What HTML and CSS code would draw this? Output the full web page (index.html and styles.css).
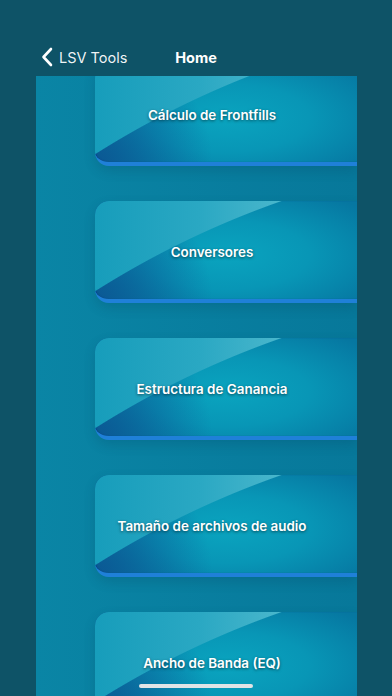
FILE: index.html
```html
<!DOCTYPE html>
<html lang="es">
<head>
  <meta charset="UTF-8" />
  <meta name="viewport" content="width=device-width, initial-scale=1.0">
  <title>Home</title>
  <link rel="stylesheet" href="styles.css">
</head>
<body>
  <div class="nav">
    <a class="back" href="#">
      <svg class="chevron" width="12" height="20" viewBox="0 0 12 20">
        <path d="M10 2 L2.5 10 L10 18" fill="none" stroke="white" stroke-width="2.6" stroke-linecap="round" stroke-linejoin="round"/>
      </svg>
      <span>LSV Tools</span>
    </a>
    <div class="title">Home</div>
  </div>

  <div class="panel">
    <div class="card-list">
      <div class="card"><span>Cálculo de Frontfills</span></div>
      <div class="card"><span>Conversores</span></div>
      <div class="card"><span>Estructura de Ganancia</span></div>
      <div class="card"><span>Tamaño de archivos de audio</span></div>
      <div class="card"><span>Ancho de Banda (EQ)</span></div>
    </div>
  </div>

  <div class="home-indicator"></div>
</body>
</html>
```

FILE: styles.css
```css
body {
  margin: 0;
  width: 392px;
  height: 696px;
  overflow: hidden;
  background-color: #0e5367;
  font-family: Inter, Roboto, "Liberation Sans", sans-serif;
  color: white;
  position: relative;
}
.nav {
  height: 76px;
  position: relative;
  display: flex;
  align-items: flex-end;
  justify-content: center;
}
.back {
  position: absolute;
  left: 41px;
  top: 47px;
  display: flex;
  align-items: center;
  gap: 6px;
  color: rgba(255, 255, 255, 0.95);
  text-decoration: none;
  font-size: 14.5px;
}
.chevron {
  display: block;
}
.title {
  font-size: 14.5px;
  font-weight: 700;
  margin-bottom: 10px;
}
.panel {
  margin: 0 35px 0 36px;
  height: 620px;
  overflow: hidden;
  background: linear-gradient(to right, #0a85a5, #07789a);
}
.card-list {
  display: flex;
  flex-direction: column;
  gap: 35px;
  padding-left: 59px;
  margin-top: -12px;
}
.card {
  position: relative;
  height: 98px;
  flex-shrink: 0;
  border-bottom: 4px solid #1f80d8;
  border-radius: 14px 0 0 14px;
  box-shadow: 0 5px 12px rgba(0, 50, 80, 0.18), inset 1px 0 1px rgba(10, 60, 130, 0.6);
  background:
    radial-gradient(circle at 0 100%, #0b5894 0%, rgba(11, 88, 148, 0) 42%),
    radial-gradient(ellipse at 50% 55%, #0aa4bf 0%, #0896b6 45%, #0677a1 95%);
  display: flex;
  align-items: center;
  justify-content: center;
  padding-top: 4px;
  box-sizing: border-box;
  height: 102px;
  padding-right: 28px;
  overflow: hidden;
}
.card::before {
  content: "";
  position: absolute;
  inset: 0;
  background: linear-gradient(to right, #179dbb 0%, #2aa8c3 40%, #4db8cd 75%);
  -webkit-mask-image: radial-gradient(circle 910px at 487px 859px, transparent 909.5px, #000 910.5px);
  mask-image: radial-gradient(circle 910px at 487px 859px, transparent 909.5px, #000 910.5px);
}
.card span {
  position: relative;
  font-size: 13.4px;
  font-weight: 600;
  text-shadow: 0 1px 3px rgba(0, 0, 0, 0.55);
}
.home-indicator {
  position: absolute;
  left: 139px;
  bottom: 8px;
  width: 114px;
  height: 4px;
  border-radius: 3px;
  background: #e2e4e6;
}
```
